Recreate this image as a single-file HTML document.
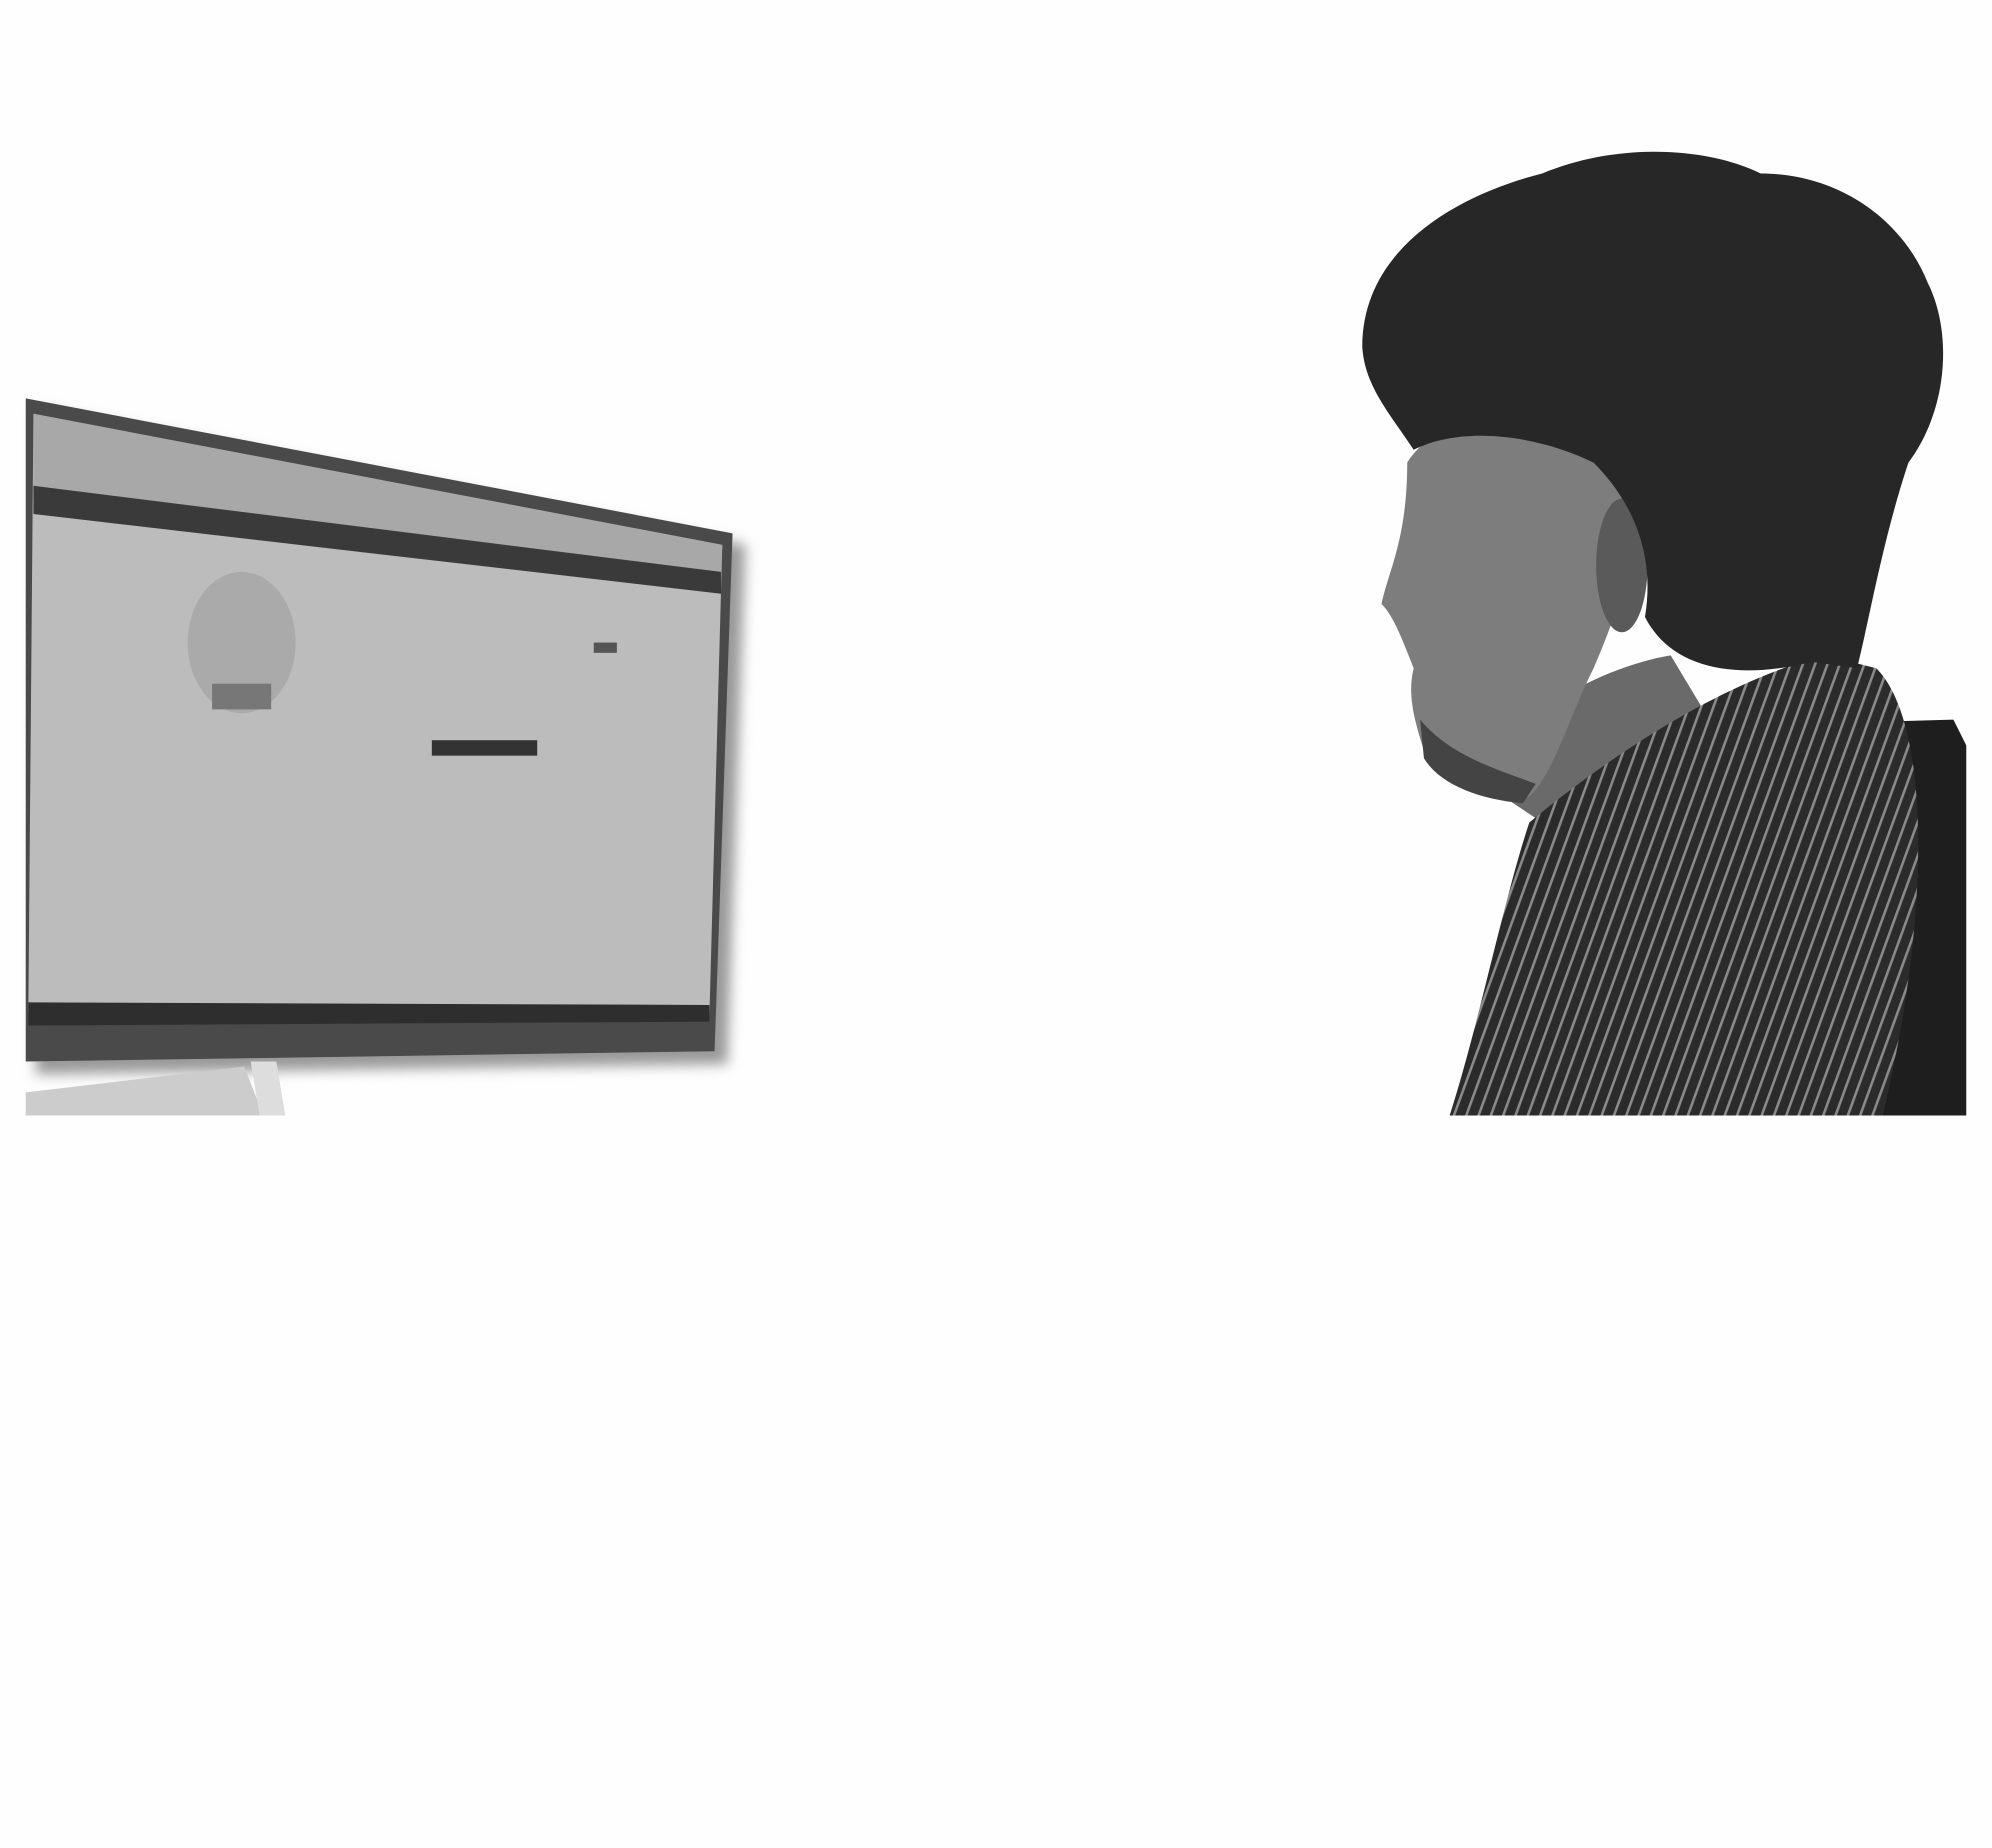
<!DOCTYPE html>
<html><head><meta charset="utf-8"><style>html,body{margin:0;padding:0;background:#fff;width:1992px;height:1848px;overflow:hidden}svg{display:block}</style></head>
<body>
<svg width="1992" height="1848" viewBox="0 0 1550 1438" xmlns="http://www.w3.org/2000/svg">
<defs>
<filter id="sh" x="-10%" y="-10%" width="130%" height="130%"><feGaussianBlur stdDeviation="5"/></filter>
<pattern id="st" width="9" height="9" patternUnits="userSpaceOnUse" patternTransform="rotate(20)"><rect width="9" height="9" fill="#2b2b2b"/><rect width="2" height="9" fill="#8a8a8a"/></pattern>
</defs>
<rect width="1550" height="1438" fill="#fefefe"/>
<polygon points="28,318 580,424 566,828 28,836" fill="#999" filter="url(#sh)"/>
<polygon points="20,310 570,415 556,818 20,826" fill="#4a4a4a"/>
<polygon points="26,322 562,424 552,790 22,788" fill="#bcbcbc"/>
<polygon points="26,322 562,424 561,445 26,378" fill="#a8a8a8"/>
<polygon points="26,378 561,445 561,462 26,400" fill="#3a3a3a"/>
<polygon points="22,780 552,782 552,795 22,798" fill="#2e2e2e"/>
<ellipse cx="188" cy="500" rx="42" ry="55" fill="#aaa"/>
<rect x="165" y="532" width="46" height="20" fill="#777"/>
<rect x="336" y="576" width="82" height="12" fill="#333"/>
<rect x="462" y="500" width="18" height="8" fill="#555"/>
<polygon points="20,850 190,830 205,868 20,868" fill="#ccc"/>
<polygon points="195,826 215,826 222,868 202,868" fill="#ddd"/>
<!-- chair -->
<path d="M1450,562 L1520,560 L1530,580 L1530,868 L1440,868 C1460,760 1475,650 1450,562 Z" fill="#1e1e1e"/>
<!-- neck -->
<path d="M1140,600 C1180,560 1240,520 1300,510 L1330,560 L1200,640 Z" fill="#6a6a6a"/>
<!-- shirt -->
<path d="M1190,640 C1250,590 1340,530 1420,510 L1460,520 C1500,560 1505,700 1465,868 L1128,868 C1150,800 1170,700 1190,640 Z" fill="url(#st)"/>
<!-- face -->
<path d="M1095,360 C1120,320 1200,300 1260,330 C1290,380 1270,450 1240,520 C1220,560 1210,600 1190,620 C1160,615 1130,610 1110,590 C1100,560 1095,540 1100,520 C1092,500 1085,480 1075,470 C1080,445 1095,420 1095,360 Z" fill="#7d7d7d"/>
<path d="M1105,560 C1130,590 1170,600 1195,610 L1185,625 C1150,622 1120,610 1108,590 Z" fill="#444"/>
<ellipse cx="1262" cy="440" rx="20" ry="52" fill="#5a5a5a"/>
<!-- hair -->
<path d="M1060,270 C1060,190 1140,150 1200,135 C1260,110 1330,115 1370,135 C1430,135 1480,170 1500,220 C1520,260 1515,320 1485,360 C1465,420 1455,480 1445,520 L1410,515 C1350,530 1300,520 1280,480 C1290,420 1260,380 1240,360 C1200,340 1140,330 1100,350 C1080,320 1062,300 1060,270 Z" fill="#272727"/>
</svg>
</body></html>
